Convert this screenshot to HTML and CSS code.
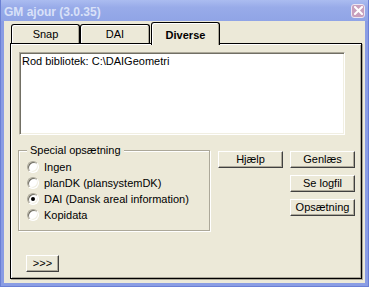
FILE: index.html
```html
<!DOCTYPE html>
<html lang="da">
<head>
<meta charset="utf-8">
<title>GM ajour (3.0.35)</title>
<link rel="stylesheet" href="styles.css">
</head>
<body>
<div class="window">
  <div class="titlebar">
    <span class="title">GM ajour (3.0.35)</span>
    <span class="close">
      <svg width="9" height="9" viewBox="0 0 9 9"><path d="M1 1L8 8M8 1L1 8" stroke="#fff" stroke-width="2" stroke-linecap="square"/></svg>
    </span>
  </div>
  <div class="frame">
    <div class="client">
      <div class="tabs">
        <div class="tab">Snap</div>
        <div class="tab">DAI</div>
        <div class="tab selected">Diverse</div>
      </div>
      <div class="panel">
        <div class="path-box">Rod bibliotek: C:\DAIGeometri</div>
        <div class="row">
          <div class="group">
            <span class="legend">Special opsætning</span>
            <div class="radio-row"><span class="radio"></span><span>Ingen</span></div>
            <div class="radio-row"><span class="radio"></span><span>planDK (plansystemDK)</span></div>
            <div class="radio-row"><span class="radio on"></span><span>DAI (Dansk areal information)</span></div>
            <div class="radio-row"><span class="radio"></span><span>Kopidata</span></div>
          </div>
          <div class="buttons">
            <div class="col">
              <button class="btn">Hjælp</button>
            </div>
            <div class="col">
              <button class="btn">Genlæs</button>
              <button class="btn">Se logfil</button>
              <button class="btn">Opsætning</button>
            </div>
          </div>
        </div>
        <button class="btn more">&gt;&gt;&gt;</button>
      </div>
    </div>
  </div>
</div>
</body>
</html>
```
FILE: styles.css
```css
* { box-sizing: border-box; }

body {
  margin: 0;
  width: 369px;
  height: 287px;
  overflow: hidden;
  font-family: "Liberation Sans", Arial, sans-serif;
  font-size: 11px;
  color: #000;
  background: #8b9ee5;
}

.window {
  width: 369px;
  height: 287px;
  display: flex;
  flex-direction: column;
  background: #8a9de4;
  border: 1px solid #6b80d4;
  border-top: none;
}

.titlebar {
  height: 21px;
  flex: none;
  display: flex;
  align-items: center;
  justify-content: space-between;
  padding: 0 3px 0 3px;
  background: linear-gradient(#abbcf0, #98abe9 35%, #90a4e6);
}

.title {
  font-weight: bold;
  font-size: 12px;
  color: #d9e1f8;
  padding-top: 2px;
}

.close {
  width: 14px;
  height: 14px;
  border: 1px solid #ece6f2;
  border-radius: 3px;
  background: #c8a0bd;
  display: flex;
  align-items: center;
  justify-content: center;
}

.frame {
  flex: 1;
  padding: 0 3px 3px 3px;
}

.client {
  height: 100%;
  background: #ece9d8;
  padding: 1px 0 0 6px;
}

.tabs {
  display: flex;
  align-items: flex-end;
  height: 21px;
  padding-left: 1px;
}

.tab {
  width: 70px;
  height: 19px;
  display: flex;
  align-items: center;
  justify-content: center;
  background: #ece9d8;
  border: 1px solid #000;
  border-bottom: none;
  border-radius: 3px 3px 0 0;
  box-shadow: inset 1px 1px 0 #fff, inset -1px 0 0 #aca899;
}

.tab:first-child { width: 69px; }

.tab.selected {
  position: relative;
  z-index: 1;
  width: 69px;
  height: 23px;
  margin-left: 1px;
  margin-bottom: -2px;
  padding-top: 1px;
  font-weight: bold;
}

.panel {
  width: 352px;
  height: 236px;
  border: 1px solid #000;
  box-shadow: inset 1px 1px 0 #fff, inset -1px -1px 0 #aca899, 1px 1px 0 #aca899;
  padding: 8px 0 0 7px;
}

.path-box {
  width: 326px;
  height: 83px;
  margin-left: 1px;
  background: #fff;
  border: 1px solid;
  border-color: #aca899 #fff #fff #aca899;
  box-shadow: inset 1px 1px 0 #716f64, inset -1px -1px 0 #f1efe2;
  padding: 2px 2px;
  line-height: 13px;
}

.row {
  display: flex;
  align-items: flex-start;
  margin-top: 9px;
}

.group {
  position: relative;
  width: 192px;
  height: 81px;
  margin-top: 6px;
  border: 1px solid #aca899;
  box-shadow: inset 1px 1px 0 #fff, 1px 1px 0 #fff;
  padding: 8px 0 0 8px;
}

.legend {
  position: absolute;
  left: 8px;
  top: -7px;
  padding: 0 3px;
  line-height: 13px;
  background: #ece9d8;
}

.radio-row {
  display: flex;
  align-items: center;
  gap: 5px;
  height: 16px;
}

.radio {
  position: relative;
  flex: none;
  width: 12px;
  height: 12px;
  border-radius: 50%;
  background: #fff;
  border: 1px solid;
  border-color: #aca899 #fff #fff #aca899;
  box-shadow: inset 1px 1px 0 #716f64, inset -1px -1px 0 #f1efe2;
}

.radio.on::after {
  content: "";
  position: absolute;
  left: 3px;
  top: 3px;
  width: 4px;
  height: 4px;
  border-radius: 50%;
  background: #000;
}

.buttons {
  display: flex;
  gap: 7px;
  margin-left: 8px;
  margin-top: 7px;
}

.col {
  display: flex;
  flex-direction: column;
  gap: 7px;
}

.btn {
  width: 65px;
  height: 17px;
  padding: 0;
  margin: 0;
  font-family: "Liberation Sans", Arial, sans-serif;
  font-size: 11px;
  line-height: 13px;
  color: #000;
  background: #ece9d8;
  border: 1px solid;
  border-color: #fff #404040 #404040 #fff;
  border-radius: 0;
  box-shadow: inset -1px -1px 0 #aca899;
}

.btn.more {
  display: block;
  width: 33px;
  margin: 24px 0 0 8px;
}
```
